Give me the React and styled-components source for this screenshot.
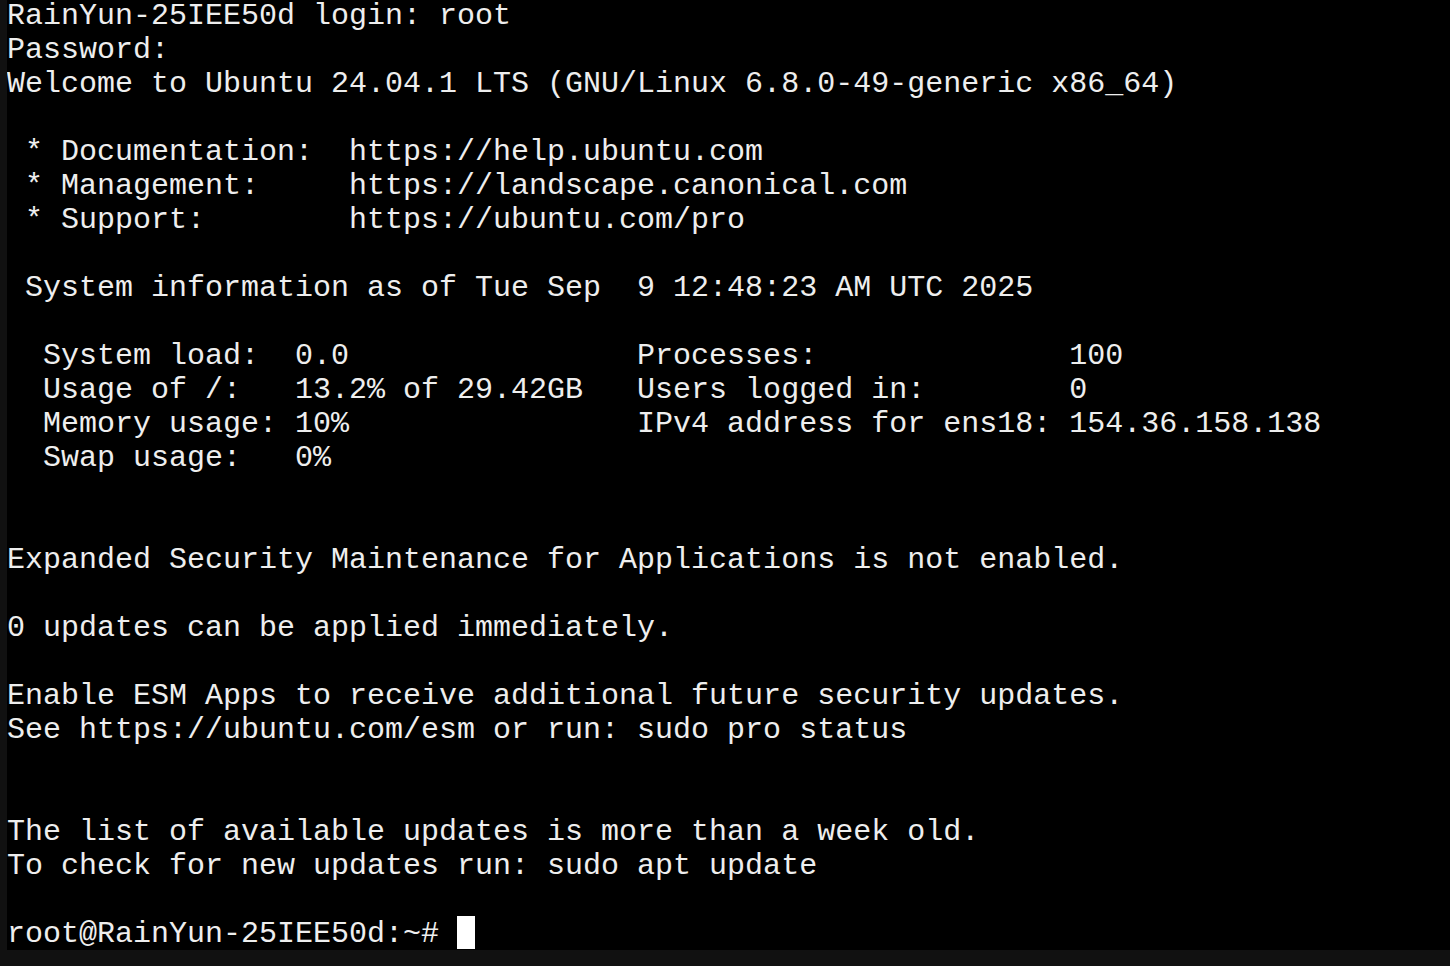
import React from 'react';
import styled, { createGlobalStyle } from 'styled-components';

const GlobalStyle = createGlobalStyle`
  html, body {
    margin: 0;
    padding: 0;
    background: #111111;
  }
  * {
    box-sizing: border-box;
  }
`;

// Window frame: thin dark gutter on the left, status strip at the bottom
const Window = styled.div`
  display: flex;
  flex-direction: column;
  width: 1450px;
  height: 966px;
  padding-left: 7px;
  background: #111111;
  overflow: hidden;
`;

const Terminal = styled.div`
  height: 950px;
  background: #000000;
  overflow: hidden;
  color: #eeeeee;
  font-family: "Liberation Mono", "Courier New", "DejaVu Sans Mono", monospace;
  font-size: 30px;
`;

// each console row is 34px high, glyphs sit near the top of the cell
const Line = styled.div`
  height: 34px;
  line-height: 32px;
  white-space: pre;
`;

const Cursor = styled.span`
  display: inline-block;
  width: 18px;
  height: 33px;
  margin-top: -2px;
  background: #ffffff;
  vertical-align: -7px;
`;

const lines = [
  'RainYun-25IEE50d login: root',
  'Password:',
  'Welcome to Ubuntu 24.04.1 LTS (GNU/Linux 6.8.0-49-generic x86_64)',
  '',
  ' * Documentation:  https://help.ubuntu.com',
  ' * Management:     https://landscape.canonical.com',
  ' * Support:        https://ubuntu.com/pro',
  '',
  ' System information as of Tue Sep  9 12:48:23 AM UTC 2025',
  '',
  '  System load:  0.0                Processes:              100',
  '  Usage of /:   13.2% of 29.42GB   Users logged in:        0',
  '  Memory usage: 10%                IPv4 address for ens18: 154.36.158.138',
  '  Swap usage:   0%',
  '',
  '',
  'Expanded Security Maintenance for Applications is not enabled.',
  '',
  '0 updates can be applied immediately.',
  '',
  'Enable ESM Apps to receive additional future security updates.',
  'See https://ubuntu.com/esm or run: sudo pro status',
  '',
  '',
  'The list of available updates is more than a week old.',
  'To check for new updates run: sudo apt update',
  '',
];

const App = () => {
  return (
    <>
      <GlobalStyle />
      <Window>
        <Terminal>
          {lines.map((text, i) => (
            <Line key={i}>{text}</Line>
          ))}
          <Line>
            {'root@RainYun-25IEE50d:~# '}
            <Cursor />
          </Line>
        </Terminal>
      </Window>
    </>
  );
};

export default App;
